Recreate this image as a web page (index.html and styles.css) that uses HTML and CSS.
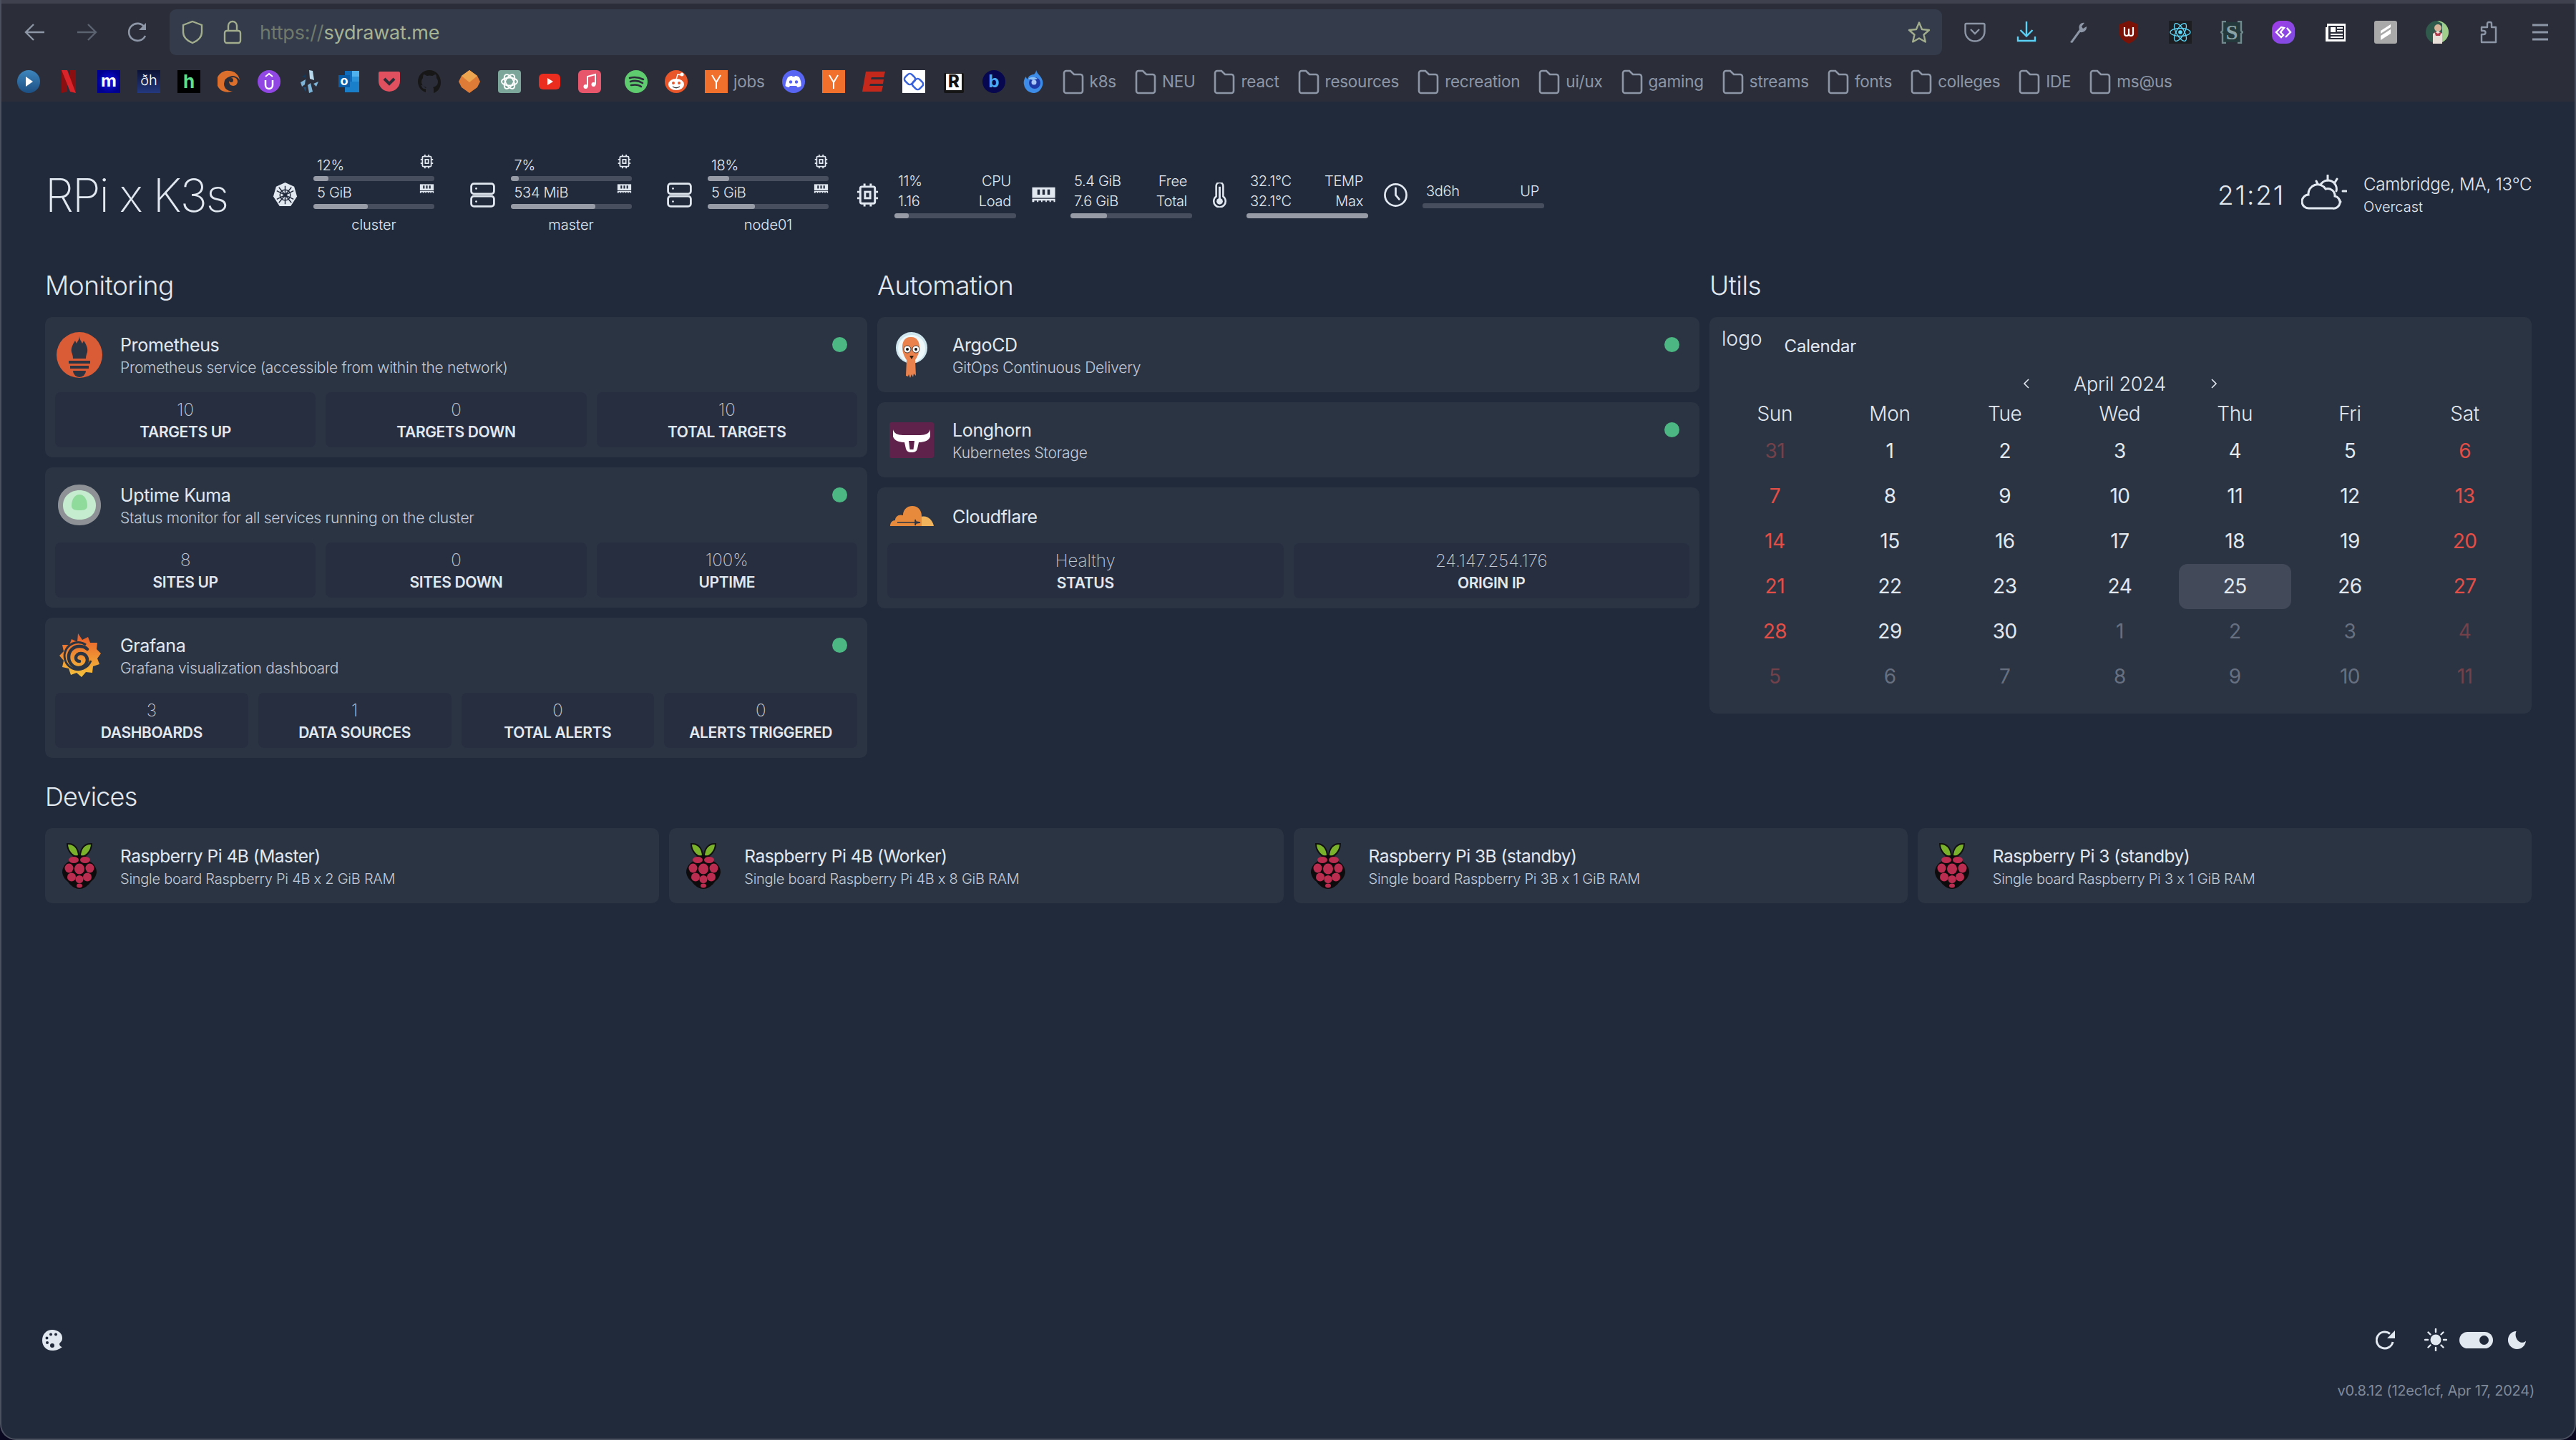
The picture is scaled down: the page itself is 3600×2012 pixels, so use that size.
FILE: index.html
```html
<!DOCTYPE html>
<html lang="en">
<head>
<meta charset="utf-8">
<title>RPi x K3s</title>
<link rel="stylesheet" href="styles.css">
</head>
<body>
<svg class="defs" width="0" height="0">
  <defs>
    <symbol id="folder" viewBox="0 0 30 36"><path d="M2 6a3 3 0 0 1 3-3h6l5 5h9a3 3 0 0 1 3 3v20a3 3 0 0 1-3 3H5a3 3 0 0 1-3-3z" fill="none" stroke="currentColor" stroke-width="2.6"/></symbol>
    <symbol id="chip" viewBox="0 0 24 24"><g fill="none" stroke="currentColor" stroke-width="2"><rect x="5" y="4" width="14" height="16" rx="1.5"/><rect x="9.5" y="9" width="5" height="6"/><path d="M9 1v3M15 1v3M9 20v3M15 20v3M2 9h3M2 15h3M19 9h3M19 15h3"/></g></symbol>
    <symbol id="ram" viewBox="0 0 24 14"><path d="M1 0h22v10H1z" fill="currentColor"/><path d="M6 2h2.4v5H6zM10.8 2h2.4v5h-2.4zM15.6 2h2.4v5h-2.4z" fill="#212a3b"/><path d="M1 11h22v3h-1.4v-1.4h-2.6V14h-1.4v-1.4h-2.6V14h-1.2v-1.4h-3V14H9.600v-1.4H7V14H5.600v-1.400H3V14H1z" fill="currentColor"/></symbol>
    <symbol id="server" viewBox="0 0 33 33"><g fill="none" stroke="currentColor" stroke-width="2.600"><rect x="1.500" y="1.500" width="30" height="13.500" rx="3.500"/><rect x="1.500" y="18" width="30" height="13.500" rx="3.500"/></g><circle cx="8" cy="8" r="1.300" fill="currentColor"/><circle cx="8" cy="25" r="1.300" fill="currentColor"/></symbol>
    <symbol id="berry" viewBox="0 0 50 64">
      <path d="M24 19C15 20 8 10 8 1c9-1 16 6 16 18zM26 19c9 1 16-9 16-18-9-1-16 6-16 18z" fill="#7ab32b" stroke="#111" stroke-width="2"/>
      <path d="M25 17c9 0 15 3 15 9 6 3 9 9 9 15-1 6-4 10-8 13-3 5-10 10-16 10S12 59 9 54c-4-3-7-7-8-13 0-6 3-12 9-15 0-6 6-9 15-9z" fill="#0e0b0c"/>
      <g fill="#bb2d50"><ellipse cx="17" cy="23.500" rx="7" ry="4.500"/><ellipse cx="33" cy="23.500" rx="7" ry="4.500"/><ellipse cx="25" cy="36" rx="7" ry="7.500"/><ellipse cx="10.500" cy="35" rx="6" ry="6.500"/><ellipse cx="39.500" cy="35" rx="6" ry="6.500"/><ellipse cx="14" cy="47.500" rx="6" ry="6"/><ellipse cx="36" cy="47.500" rx="6" ry="6"/><ellipse cx="25" cy="50.500" rx="5.500" ry="5.500"/><ellipse cx="25" cy="59.500" rx="4" ry="3"/></g>
    </symbol>
    <linearGradient id="graf" x1="0" y1="1" x2="0" y2="0"><stop offset="0" stop-color="#f5c23c"/><stop offset="1" stop-color="#e9592a"/></linearGradient>
    <linearGradient id="blue" x1="0" y1="0" x2="0" y2="1"><stop offset="0" stop-color="#3d86bd"/><stop offset="1" stop-color="#1d4f83"/></linearGradient>
    <linearGradient id="purp" x1="0" y1="0" x2="1" y2="1"><stop offset="0" stop-color="#a23be8"/><stop offset="1" stop-color="#7b4fe0"/></linearGradient>
    <linearGradient id="navy" x1="0" y1="0" x2="0" y2="1"><stop offset="0" stop-color="#0c1336"/><stop offset="1" stop-color="#24387e"/></linearGradient>
    <radialGradient id="mblue"><stop offset="0" stop-color="#1414e8"/><stop offset="1" stop-color="#000090"/></radialGradient>
  </defs>
</svg>
<div class="window">
  <header class="browser">
    <div class="nav">
      <svg class="nav-ic" viewBox="0 0 32 32"><path d="M29 16H4M14 5 3 16l11 11" fill="none" stroke="#8d96a6" stroke-width="2.400"/></svg>
      <svg class="nav-ic dim" viewBox="0 0 32 32"><path d="M3 16h25M18 5l11 11-11 11" fill="none" stroke="#5b6270" stroke-width="2.400"/></svg>
      <svg class="nav-ic" viewBox="0 0 32 32"><path d="M26 21a12 12 0 1 1-1-12" fill="none" stroke="#8d96a6" stroke-width="2.600"/><path d="M27 3v10H17z" fill="#8d96a6"/></svg>
      <div class="address">
        <svg class="ad-shield" viewBox="0 0 32 34"><path d="M16 2 29 7v10c0 7-6 12-13 15C9 29 3 24 3 17V7z" fill="none" stroke="#a1ad8c" stroke-width="2.400"/></svg>
        <svg class="ad-lock" viewBox="0 0 26 34"><path d="M7 15V8a6 6 0 0 1 12 0v7" fill="none" stroke="#a1ad8c" stroke-width="2.400"/><rect x="2" y="15" width="22" height="17" rx="3" fill="none" stroke="#a1ad8c" stroke-width="2.400"/></svg>
        <span class="url"><span class="proto">https://</span>sydrawat.me</span>
        <svg class="ad-star" viewBox="0 0 32 32"><path d="M16 2.500l4 9.500 10 1-7.500 6.500 2.300 10L16 24.500 7.200 29.500l2.300-10L2 13l10-1z" fill="none" stroke="#a1ad8c" stroke-width="2.400" stroke-linejoin="round"/></svg>
      </div>
      <div class="ext">
        <svg class="ic32" viewBox="0 0 32 32"><path d="M4 4h24a1.500 1.500 0 0 1 1.500 1.500V15a13.500 13.500 0 0 1-27 0V5.500A1.500 1.500 0 0 1 4 4z" fill="none" stroke="#8d96a6" stroke-width="2.400"/><path d="M10 12l6 6 6-6" fill="none" stroke="#8d96a6" stroke-width="2.400"/></svg>
        <svg class="ic32" viewBox="0 0 32 32"><path d="M16 1v20M7.500 13l8.500 8.500 8.500-8.500M4 22v6h24v-6" fill="none" stroke="#5ad1f5" stroke-width="2.400"/></svg>
        <svg class="ic32" viewBox="0 0 32 32"><path d="M5 30 18 12c-2-5 2-10 7-9l-4 5 2 3 5-3c1 5-4 9-9 8L8 31z" fill="#8d96a6"/></svg>
        <svg class="ic32" viewBox="0 0 32 32"><path d="M16 0 29 5v13c0 6-6 11-13 14C9 29 3 24 3 18V5z" fill="#7a1208"/><path d="M10 9v9a3 3 0 0 0 6 0v-7 7a3 3 0 0 0 6 0V9" fill="none" stroke="#fff" stroke-width="2.200"/></svg>
        <svg class="ic32" viewBox="0 0 32 32"><rect width="32" height="32" fill="#1c1e21"/><g fill="none" stroke="#61dafb" stroke-width="1.300"><ellipse cx="16" cy="16" rx="14" ry="5.500"/><ellipse cx="16" cy="16" rx="14" ry="5.500" transform="rotate(60 16 16)"/><ellipse cx="16" cy="16" rx="14" ry="5.500" transform="rotate(120 16 16)"/></g><circle cx="16" cy="16" r="2.800" fill="#61dafb"/></svg>
        <svg class="ic32" viewBox="0 0 32 32"><rect x="3" y="2" width="26" height="28" fill="#24393c"/><path d="M8 1H3v13l-2 2 2 2v13h5M24 1h5v13l2 2-2 2v13h-5" fill="none" stroke="#70898c" stroke-width="2.400"/><text class="ext-s" x="16" y="26" text-anchor="middle">S</text></svg>
        <svg class="ic32" viewBox="0 0 32 32"><rect width="32" height="32" rx="12" fill="url(#purp)"/><path d="M13 9 6 16l7 7 3-3-4-4 5-6zM21 10l5 6-7 7" fill="none" stroke="#fff" stroke-width="2.400"/></svg>
        <svg class="ic32" viewBox="0 0 32 32"><path d="M5 4h26v25H3V9h2z" fill="#fff"/><path d="M7 7h22v19H7z" fill="#2b2e39"/><path d="M10 9h7v7h-7zM19 9h8v2h-8zM19 13h8v2h-8zM10 18h17v2H10zM10 22h17v2H10z" fill="#fff"/></svg>
        <svg class="ic32" viewBox="0 0 32 32"><rect width="32" height="32" rx="3" fill="#a9a9a9"/><path d="M23 5 9 14v4l14-9zM23 12 9 21v6l14-9z" fill="#fff"/></svg>
        <svg class="ic32" viewBox="0 0 32 32"><circle cx="16" cy="16" r="16" fill="#2f5a4c"/><path d="M16 0a16 16 0 0 1 16 16c0 6-4 12-9 14V4z" fill="#9fcf8a"/><circle cx="17" cy="10" r="5" fill="#d9b49a"/><path d="M10 32V18l7-4 6 4v14z" fill="#e8e0d8"/><path d="M12 15l5 3 5-3-2 6h-6z" fill="#b23a4a"/></svg>
        <svg class="ic32" viewBox="0 0 32 32"><path d="M14 9V4a2 2 0 0 1 2-2h2a2 2 0 0 1 2 2v5h6v21H6V19h3a2.500 2.500 0 0 0 0-5H6V9z" fill="none" stroke="#8d96a6" stroke-width="2.400" stroke-linejoin="round"/></svg>
        <svg class="ic32" viewBox="0 0 32 32"><path d="M5 6h22M5 16h22M5 26h22" stroke="#8d96a6" stroke-width="3"/></svg>
      </div>
    </div>
    <div class="bookmarks">
      <svg class="ic32" viewBox="0 0 32 32"><circle cx="16" cy="16" r="16" fill="url(#blue)"/><path d="M12 9l10 7-10 7z" fill="#fff"/></svg>
      <svg class="ic32" viewBox="0 0 32 32"><path d="M6 0h8v30l-8 2z" fill="#8a0f10"/><path d="M18 0h8v32l-8-2z" fill="#8a0f10"/><path d="M6 0h8l12 32-8-2z" fill="#d8242a"/></svg>
      <svg class="ic32" viewBox="0 0 32 32"><rect width="32" height="32" fill="url(#mblue)"/><text class="fav-b" x="16" y="23" text-anchor="middle">m</text></svg>
      <svg class="ic32" viewBox="0 0 32 32"><rect width="32" height="32" fill="url(#navy)"/><text class="fav-t" x="16" y="21" text-anchor="middle">ðh</text></svg>
      <svg class="ic32" viewBox="0 0 32 32"><rect width="32" height="32" fill="#000"/><text class="fav-h" x="16" y="25" text-anchor="middle">h</text></svg>
      <svg class="ic32" viewBox="0 0 32 32"><path d="M16 1a15 15 0 0 1 15 13 11 11 0 0 0-14-5 11 11 0 0 0-8 10c0 7 6 11 12 10a15 15 0 1 1-5-28z" fill="#dc6f2c"/><circle cx="22" cy="16" r="6" fill="#dc6f2c"/><circle cx="19" cy="14" r="3" fill="#2b2e39"/></svg>
      <svg class="ic32" viewBox="0 0 32 32"><circle cx="16" cy="16" r="16" fill="#9147e4"/><path d="M11 14v7a5 5 0 0 0 10 0v-7" fill="none" stroke="#fff" stroke-width="2.500"/><path d="M11 9l5-4 5 4" fill="none" stroke="#fff" stroke-width="2"/></svg>
      <svg class="ic32" viewBox="0 0 32 32"><path d="M16 0l5 1 2 13-6-2z" fill="#b8d9ec"/><path d="M4 17l7-4-1 7-4 3zM14 21l4-3 3 12-5 2zM22 19l7-3-3 7z" fill="#7db4d8"/><path d="M8 24l4 0-1 6z" fill="#1f4e79"/><path d="M6 9l5-3v5z" fill="#16395a"/></svg>
      <svg class="ic32" viewBox="0 0 32 32"><path d="M10 1h20v15H10z" fill="#0f6cbd"/><path d="M20 1h10v8H20z" fill="#4fb2ef"/><path d="M20 9h10v8H20z" fill="#2a92d8"/><path d="M10 16h20v15H10z" fill="#1a7fcb"/><rect x="1" y="7" width="16" height="17" fill="#0a5ca7"/><text class="fav-o" x="9" y="21" text-anchor="middle">o</text></svg>
      <svg class="ic32" viewBox="0 0 32 32"><path d="M3 2h26a2 2 0 0 1 2 2v11a15 15 0 0 1-30 0V4a2 2 0 0 1 2-2z" fill="#e0505f"/><path d="M9 12l7 7 7-7" fill="none" stroke="#2b2e39" stroke-width="4"/></svg>
      <svg class="ic32" viewBox="0 0 32 32"><path d="M16 0C7 0 0 7 0 16c0 7 4.500 13 11 15v-5c-4 1-5-2-5.500-3-.5-1-2-2 0-2s3 2 4 3c1 1 2 1 2.500 0-4-1-7-3-7-8 0-2 1-4 2-5 0-1 0-3 1-5 2 0 4 2 5 2a14 14 0 0 1 7 0c1 0 3-2 5-2 1 2 1 4 1 5 1 1 2 3 2 5 0 5-3 7-7 8 1 1 1 2 1 3v5c6.500-2 10-8 10-15C32 7 25 0 16 0z" fill="#171717"/></svg>
      <svg class="ic32" viewBox="0 0 32 32"><path d="M16 0l11 8 4 8-4 8-11 8-11-8-4-8 4-8z" fill="#de7c37"/><path d="M16 0l11 8-11 9L5 8z" fill="#eea54f"/></svg>
      <svg class="ic32" viewBox="0 0 32 32"><rect width="32" height="32" rx="4" fill="#7ca69a"/><g fill="none" stroke="#fff" stroke-width="1.800"><ellipse cx="16" cy="16" rx="11" ry="5.500"/><ellipse cx="16" cy="16" rx="11" ry="5.500" transform="rotate(60 16 16)"/><ellipse cx="16" cy="16" rx="11" ry="5.500" transform="rotate(120 16 16)"/></g></svg>
      <svg class="ic32" viewBox="0 0 32 32"><rect x="1" y="5" width="30" height="22" rx="6" fill="#ea2d1f"/><path d="M13 11l8 5-8 5z" fill="#fff"/></svg>
      <svg class="ic32" viewBox="0 0 32 32"><rect width="32" height="32" rx="6" fill="#e8566c"/><path d="M13 23V9l11-3v14" fill="none" stroke="#fff" stroke-width="2"/><circle cx="10.500" cy="23" r="3" fill="#fff"/><circle cx="21.500" cy="20" r="3" fill="#fff"/></svg>
      <svg class="ic32 gap-left" viewBox="0 0 32 32"><circle cx="16" cy="16" r="16" fill="#5fcc6f"/><path d="M7 11c7-2 13-1 19 2M8 16c6-2 12-1 17 2M9 21c5-1 10-1 14 2" fill="none" stroke="#2b2e39" stroke-width="2.600" stroke-linecap="round"/></svg>
      <svg class="ic32" viewBox="0 0 32 32"><circle cx="16" cy="16" r="16" fill="#e9562a"/><ellipse cx="16" cy="20" rx="11" ry="8" fill="#fff"/><circle cx="24" cy="6" r="2.500" fill="#fff"/><path d="M16 13l2-7 6 1" fill="none" stroke="#fff" stroke-width="1.400"/><circle cx="12" cy="18" r="2" fill="#e9562a"/><circle cx="20" cy="18" r="2" fill="#e9562a"/><path d="M11 23c3 2 7 2 10 0" fill="none" stroke="#333" stroke-width="1.400"/></svg>
      <a class="bm bm-plain"><svg class="ic32" viewBox="0 0 32 32"><rect width="32" height="32" fill="#f0702c"/><path d="M10 7l6 10 6-10M16 17v9" fill="none" stroke="#fff" stroke-width="2"/></svg><span>jobs</span></a>
      <svg class="ic32" viewBox="0 0 32 32"><circle cx="16" cy="16" r="16" fill="#5865f2"/><path d="M8 10c3-2 5-2 6-2l.5 1h3l.5-1c1 0 3 0 6 2 2 4 3 8 2.500 12-2 1.500-4 2-5 2l-1.500-2h-9L9.500 24c-1 0-3-.5-5-2C4.500 18 6 14 8 10z" fill="#fff"/><circle cx="12" cy="16.500" r="2.200" fill="#5865f2"/><circle cx="20" cy="16.500" r="2.200" fill="#5865f2"/></svg>
      <svg class="ic32" viewBox="0 0 32 32"><rect width="32" height="32" fill="#f0702c"/><path d="M10 7l6 10 6-10M16 17v9" fill="none" stroke="#fff" stroke-width="2"/></svg>
      <svg class="ic32" viewBox="0 0 32 32"><path d="M5 2h27l-2 8H13l-1 3h18l-1 6H11l-1 3h19l-2 8H0z" fill="#c4281b"/></svg>
      <svg class="ic32" viewBox="0 0 32 32"><rect width="32" height="32" fill="#fff"/><g fill="none" stroke="#3a63db" stroke-width="2.600"><rect x="4" y="6" width="13" height="13" rx="4" transform="rotate(45 10.500 12.500)"/><rect x="15" y="13" width="13" height="13" rx="4" transform="rotate(45 21.500 19.500)"/></g></svg>
      <svg class="ic32" viewBox="0 0 32 32"><rect x="2" y="4" width="28" height="28" rx="2" fill="#151515"/><rect x="5" y="5" width="22" height="23" fill="#fff"/><text class="fav-r" x="16" y="24" text-anchor="middle">R</text></svg>
      <svg class="ic32" viewBox="0 0 32 32"><circle cx="16" cy="16" r="16" fill="#07074f"/><text class="fav-bb" x="16" y="24" text-anchor="middle">b</text></svg>
      <svg class="ic32" viewBox="0 0 32 32"><path d="M19 0c1 4 4 6 6 9 3 4 4 8 3 12-2 7-7 11-12 11C9 32 3 27 2 20c-1-5 1-9 3-11 0 2 1 3 2 4 1-5 5-7 9-7 2-2 3-4 3-6z" fill="#3d8de8"/><circle cx="17" cy="18" r="8" fill="#1e3aa8"/><circle cx="16" cy="17" r="3.500" fill="#a9c7f5"/><path d="M8 12c4-3 9-3 13 0l-6 2z" fill="#8cc0f4"/></svg>
      <a class="bm bm-first"><svg class="ic-fold"><use href="#folder"/></svg>k8s</a>
      <a class="bm"><svg class="ic-fold"><use href="#folder"/></svg>NEU</a>
      <a class="bm"><svg class="ic-fold"><use href="#folder"/></svg>react</a>
      <a class="bm"><svg class="ic-fold"><use href="#folder"/></svg>resources</a>
      <a class="bm"><svg class="ic-fold"><use href="#folder"/></svg>recreation</a>
      <a class="bm"><svg class="ic-fold"><use href="#folder"/></svg>ui/ux</a>
      <a class="bm"><svg class="ic-fold"><use href="#folder"/></svg>gaming</a>
      <a class="bm"><svg class="ic-fold"><use href="#folder"/></svg>streams</a>
      <a class="bm"><svg class="ic-fold"><use href="#folder"/></svg>fonts</a>
      <a class="bm"><svg class="ic-fold"><use href="#folder"/></svg>colleges</a>
      <a class="bm"><svg class="ic-fold"><use href="#folder"/></svg>IDE</a>
      <a class="bm"><svg class="ic-fold"><use href="#folder"/></svg>ms@us</a>
    </div>
  </header>

  <main class="page">
    <div class="top">
      <h1 class="brand">RPi x K3s</h1>
      <div class="res res-node">
        <svg class="res-ic" viewBox="0 0 36 36"><path d="M18 0l13 6 4 14-9 14H10L1 20 5 6z" fill="#e2e8f0"/><g fill="none" stroke="#212a3b" stroke-width="1.500"><circle cx="18" cy="18" r="7.500"/><path d="M18 5v26M6 12l24 12M30 12 6 24M9 7l18 22M27 7 9 29"/></g><circle cx="18" cy="18" r="2.500" fill="#212a3b"/></svg>
        <div class="res-col">
          <div class="res-row"><span>12%</span><svg class="mini-chip"><use href="#chip"/></svg></div>
          <div class="bar"><i class="fill" style="width:12.600%"></i></div>
          <div class="res-row"><span>5 GiB</span><svg class="mini-ram"><use href="#ram"/></svg></div>
          <div class="bar"><i class="fill" style="width:45%"></i></div>
          <div class="res-name">cluster</div>
        </div>
      </div>
      <div class="res res-node">
        <svg class="res-ic"><use href="#server"/></svg>
        <div class="res-col">
          <div class="res-row"><span>7%</span><svg class="mini-chip"><use href="#chip"/></svg></div>
          <div class="bar"><i class="fill" style="width:7%"></i></div>
          <div class="res-row"><span>534 MiB</span><svg class="mini-ram"><use href="#ram"/></svg></div>
          <div class="bar"><i class="fill" style="width:70%"></i></div>
          <div class="res-name">master</div>
        </div>
      </div>
      <div class="res res-node res-last">
        <svg class="res-ic"><use href="#server"/></svg>
        <div class="res-col">
          <div class="res-row"><span>18%</span><svg class="mini-chip"><use href="#chip"/></svg></div>
          <div class="bar"><i class="fill" style="width:18%"></i></div>
          <div class="res-row"><span>5 GiB</span><svg class="mini-ram"><use href="#ram"/></svg></div>
          <div class="bar"><i class="fill" style="width:39%"></i></div>
          <div class="res-name">node01</div>
        </div>
      </div>
      <div class="res res-host">
        <svg class="res-ic"><use href="#chip"/></svg>
        <div class="host-col">
          <div class="host-row"><span>11%</span><span>CPU</span></div>
          <div class="host-row"><span>1.16</span><span>Load</span></div>
          <div class="bar host-bar"><i class="fill" style="width:11.500%"></i></div>
        </div>
      </div>
      <div class="res res-host">
        <svg class="res-ic ram-big"><use href="#ram"/></svg>
        <div class="host-col">
          <div class="host-row"><span>5.4 GiB</span><span>Free</span></div>
          <div class="host-row"><span>7.6 GiB</span><span>Total</span></div>
          <div class="bar host-bar"><i class="fill" style="width:30%"></i></div>
        </div>
      </div>
      <div class="res res-host">
        <svg class="res-ic" viewBox="0 0 36 36"><path d="M13 20V5a5 5 0 0 1 10 0v15a8.500 8.500 0 1 1-10 0z" fill="none" stroke="currentColor" stroke-width="2.600"/><path d="M18 6v19" stroke="currentColor" stroke-width="3"/><circle cx="18" cy="27" r="4.500" fill="currentColor"/></svg>
        <div class="host-col">
          <div class="host-row"><span>32.1°C</span><span>TEMP</span></div>
          <div class="host-row"><span>32.1°C</span><span>Max</span></div>
          <div class="bar host-bar"><i class="fill" style="width:100%"></i></div>
        </div>
      </div>
      <div class="res res-host res-up">
        <svg class="res-ic" viewBox="0 0 36 36"><circle cx="18" cy="18" r="15.500" fill="none" stroke="currentColor" stroke-width="2.800"/><path d="M18 8v10l5 6" fill="none" stroke="currentColor" stroke-width="2.800" stroke-linecap="round"/></svg>
        <div class="host-col">
          <div class="host-row up-row"><span>3d6h</span><span>UP</span></div>
          <div class="bar host-bar"></div>
        </div>
      </div>
      <div class="weather">
        <span class="clock">21:21</span>
        <svg class="wx-ic" viewBox="0 0 64 50"><g fill="none" stroke="currentColor" stroke-width="3" stroke-linecap="round"><path d="M37 1v7M50 6l-3 5M58 23h5M53 35l2 3M21 9l2 4"/><path d="M27 14a12 12 0 0 1 22 9"/><path d="M11 47a9.500 9.500 0 0 1-1-19A13 13 0 0 1 34 20a10 10 0 0 1 13 10 8.500 8.500 0 0 1-3 17z"/></g></svg>
        <div class="wx-text">
          <div class="wx-city">Cambridge, MA, 13°C</div>
          <div class="wx-cond">Overcast</div>
        </div>
      </div>
    </div>

    <div class="columns">
      <section>
        <h2 class="sec-title">Monitoring</h2>
        <div class="stack">
          <article class="card">
            <div class="svc">
              <svg class="svc-ic" viewBox="0 0 64 64"><circle cx="32" cy="32" r="32" fill="#d95c36"/><path d="M32 5c0 6 3 8 4 11l2-4c4 6 6 11 5 16-1 3-2 5-2 9H23c0-4-1-6-2-9-1-5 1-10 5-16l2 4c1-3 4-5 4-11z" fill="#2b3443"/><path d="M17 40h30v4H17zM19 47h26v4H19z" fill="#2b3443"/><path d="M23 54h18a9 9 0 0 1-18 0z" fill="#2b3443"/></svg>
              <div class="svc-text"><div class="svc-name">Prometheus</div><div class="svc-desc">Prometheus service (accessible from within the network)</div></div>
              <i class="dot"></i>
            </div>
            <div class="stats">
              <div class="stat"><div class="val">10</div><div class="lab">Targets Up</div></div>
              <div class="stat"><div class="val">0</div><div class="lab">Targets Down</div></div>
              <div class="stat"><div class="val">10</div><div class="lab">Total Targets</div></div>
            </div>
          </article>
          <article class="card">
            <div class="svc">
              <svg class="svc-ic" viewBox="0 0 64 64"><path d="M32 3c18 0 30 12 30 29 0 16-12 28-30 28S2 48 2 32C2 15 14 3 32 3z" fill="#8e9297"/><path d="M32 11c13 0 23 9 23 21 0 13-10 20-23 20S9 45 9 32c0-12 10-21 23-21z" fill="#c6ecd0"/><path d="M32 17c7 0 11 7 11 16 0 5-5 6-11 6s-11-1-11-6c0-9 4-16 11-16z" fill="#8edb9b"/></svg>
              <div class="svc-text"><div class="svc-name">Uptime Kuma</div><div class="svc-desc">Status monitor for all services running on the cluster</div></div>
              <i class="dot"></i>
            </div>
            <div class="stats">
              <div class="stat"><div class="val">8</div><div class="lab">Sites Up</div></div>
              <div class="stat"><div class="val">0</div><div class="lab">Sites Down</div></div>
              <div class="stat"><div class="val">100%</div><div class="lab">Uptime</div></div>
            </div>
          </article>
          <article class="card">
            <div class="svc">
              <svg class="svc-ic" viewBox="0 0 64 64"><path d="M30 1l6 9 8-4 3 8 10 0-1 9 6 6-5 7 3 8-9 3-1 9-9-1-6 7-7-6-8 3-3-9-9-2 2-9-6-7 6-6-2-9 10 0 3-8 8 4z" fill="url(#graf)"/><path d="M41 17a19 19 0 1 0 7 22" fill="none" stroke="#2b3443" stroke-width="3"/><path d="M43 23c-3-3-7-4-11-4-9 0-15 7-15 15s6 15 14 15c7 0 12-5 12-11 0-5-4-9-9-9-4 0-7 3-7 6s2 5 5 5" fill="none" stroke="#2b3443" stroke-width="4.500" stroke-linecap="round"/></svg>
              <div class="svc-text"><div class="svc-name">Grafana</div><div class="svc-desc">Grafana visualization dashboard</div></div>
              <i class="dot"></i>
            </div>
            <div class="stats">
              <div class="stat"><div class="val">3</div><div class="lab">Dashboards</div></div>
              <div class="stat"><div class="val">1</div><div class="lab">Data Sources</div></div>
              <div class="stat"><div class="val">0</div><div class="lab">Total Alerts</div></div>
              <div class="stat"><div class="val">0</div><div class="lab">Alerts Triggered</div></div>
            </div>
          </article>
        </div>
      </section>

      <section>
        <h2 class="sec-title">Automation</h2>
        <div class="stack">
          <article class="card">
            <div class="svc">
              <svg class="svc-ic" viewBox="0 0 64 64"><circle cx="32" cy="22" r="22" fill="#cfe6ee"/><circle cx="32" cy="23" r="19" fill="#eef8fb"/><path d="M32 7c7 0 11 6 11 14 0 9-4 15-6 18l1 22-3-3-1 5-2-4-2 5-2-5-1 3-3-1 1-22c-2-3-6-9-6-18 0-8 4-14 11-14z" fill="#e9824d"/><circle cx="26" cy="24" r="5" fill="#fff" stroke="#222" stroke-width=".8"/><circle cx="38" cy="24" r="5" fill="#fff" stroke="#222" stroke-width=".8"/><circle cx="26" cy="24" r="2" fill="#111"/><circle cx="38" cy="24" r="2" fill="#111"/><path d="M29 33h6l-3 5z" fill="#321"/></svg>
              <div class="svc-text"><div class="svc-name">ArgoCD</div><div class="svc-desc">GitOps Continuous Delivery</div></div>
              <i class="dot"></i>
            </div>
          </article>
          <article class="card">
            <div class="svc">
              <svg class="svc-ic" viewBox="0 0 64 64"><rect x="1" y="7" width="62" height="50" rx="3" fill="#5f224a"/><path d="M6 17c1 5 6 8 14 8h24c8 0 13-3 14-8v10c-2 6-9 8-16 8l-2 9c-1 4-4 5-8 5s-7-1-8-5l-2-9c-7 0-14-2-16-8z" fill="#fff"/><path d="M28 33h8l-1.500 12h-5z" fill="#5f224a"/></svg>
              <div class="svc-text"><div class="svc-name">Longhorn</div><div class="svc-desc">Kubernetes Storage</div></div>
              <i class="dot"></i>
            </div>
          </article>
          <article class="card">
            <div class="svc svc-short">
              <svg class="svc-ic" viewBox="0 0 64 64"><path d="M2 47c0-5 3-8 7-8 0-5 5-9 11-7 0-8 6-13 13-13 8 0 13 6 13 14l2 14z" fill="#e88a3c"/><path d="M46 34c8-2 15 4 17 13H46z" fill="#f2b35d"/><path d="M12 42h26M37 46v-8l1 3 6 1-6 1z" fill="none" stroke="#2b3443" stroke-width="1.500"/></svg>
              <div class="svc-text"><div class="svc-name">Cloudflare</div></div>
            </div>
            <div class="stats">
              <div class="stat"><div class="val">Healthy</div><div class="lab">Status</div></div>
              <div class="stat"><div class="val">24.147.254.176</div><div class="lab">Origin IP</div></div>
            </div>
          </article>
        </div>
      </section>

      <section>
        <h2 class="sec-title">Utils</h2>
        <article class="card cal">
          <div class="cal-head"><span class="cal-logo">logo</span><span class="cal-title">Calendar</span></div>
          <div class="cal-nav">
            <svg class="chev" viewBox="0 0 10 14"><path d="M8 1 2 7l6 6" fill="none" stroke="currentColor" stroke-width="1.600"/></svg>
            <span class="cal-month">April 2024</span>
            <svg class="chev" viewBox="0 0 10 14"><path d="M2 1l6 6-6 6" fill="none" stroke="currentColor" stroke-width="1.600"/></svg>
          </div>
          <div class="cal-grid">
            <div class="dow">Sun</div><div class="dow">Mon</div><div class="dow">Tue</div><div class="dow">Wed</div><div class="dow">Thu</div><div class="dow">Fri</div><div class="dow">Sat</div>
            <div class="day we out">31</div><div class="day">1</div><div class="day">2</div><div class="day">3</div><div class="day">4</div><div class="day">5</div><div class="day we">6</div>
            <div class="day we">7</div><div class="day">8</div><div class="day">9</div><div class="day">10</div><div class="day">11</div><div class="day">12</div><div class="day we">13</div>
            <div class="day we">14</div><div class="day">15</div><div class="day">16</div><div class="day">17</div><div class="day">18</div><div class="day">19</div><div class="day we">20</div>
            <div class="day we">21</div><div class="day">22</div><div class="day">23</div><div class="day">24</div><div class="day today">25</div><div class="day">26</div><div class="day we">27</div>
            <div class="day we">28</div><div class="day">29</div><div class="day">30</div><div class="day out">1</div><div class="day out">2</div><div class="day out">3</div><div class="day we out">4</div>
            <div class="day we out">5</div><div class="day out">6</div><div class="day out">7</div><div class="day out">8</div><div class="day out">9</div><div class="day out">10</div><div class="day we out">11</div>
          </div>
        </article>
      </section>
    </div>

    <section class="devices">
      <h2 class="sec-title">Devices</h2>
      <div class="dev-grid">
        <article class="card"><div class="svc"><svg class="svc-ic"><use href="#berry"/></svg><div class="svc-text"><div class="svc-name">Raspberry Pi 4B (Master)</div><div class="svc-desc">Single board Raspberry Pi 4B x 2 GiB RAM</div></div></div></article>
        <article class="card"><div class="svc"><svg class="svc-ic"><use href="#berry"/></svg><div class="svc-text"><div class="svc-name">Raspberry Pi 4B (Worker)</div><div class="svc-desc">Single board Raspberry Pi 4B x 8 GiB RAM</div></div></div></article>
        <article class="card"><div class="svc"><svg class="svc-ic"><use href="#berry"/></svg><div class="svc-text"><div class="svc-name">Raspberry Pi 3B (standby)</div><div class="svc-desc">Single board Raspberry Pi 3B x 1 GiB RAM</div></div></div></article>
        <article class="card"><div class="svc"><svg class="svc-ic"><use href="#berry"/></svg><div class="svc-text"><div class="svc-name">Raspberry Pi 3 (standby)</div><div class="svc-desc">Single board Raspberry Pi 3 x 1 GiB RAM</div></div></div></article>
      </div>
    </section>

    <footer class="foot">
      <div class="foot-row">
        <svg class="palette" viewBox="0 0 28 29"><path d="M14 0C6 0 0 6 0 15c0 8 6 14 14 14 5 0 9-1 14-5-2 0-4-2-4-4 0-1 1-2 2-3 2-2 2-4 2-6C28 5 22 0 14 0z" fill="#e2e8f0"/><g fill="#212a3b"><circle cx="12" cy="6.500" r="2"/><circle cx="19" cy="6.500" r="2"/><circle cx="6.500" cy="11.500" r="2"/><circle cx="7" cy="18" r="2"/><circle cx="14" cy="22" r="3"/></g></svg>
        <div class="foot-tools">
          <svg class="f-reload" viewBox="0 0 28 28"><path d="M24 17A11.500 11.500 0 1 1 20 5.500" fill="none" stroke="#e2e8f0" stroke-width="3"/><path d="M27 1v11H16z" fill="#e2e8f0"/></svg>
          <svg class="f-sun" viewBox="0 0 32 32"><circle cx="16" cy="16" r="7.500" fill="#e2e8f0"/><path d="M16 1v4M16 27v4M1 16h4M27 16h4M5.500 5.500l3 3M23.500 23.500l3 3M5.500 26.500l3-3M23.500 8.500l3-3" stroke="#e2e8f0" stroke-width="2.400" stroke-linecap="round"/></svg>
          <div class="toggle"><i class="knob"></i></div>
          <svg class="f-moon" viewBox="0 0 28 28"><path d="M13 1C6 1 1 7 1 14s6 13 13 13 12-5 13-12c-2 2-5 3-8 2-5-2-9-9-6-16z" fill="#e2e8f0"/></svg>
        </div>
      </div>
      <div class="version">v0.8.12 (12ec1cf, Apr 17, 2024)</div>
    </footer>
  </main>
</div>
</body>
</html>
```
FILE: styles.css
```css
* { box-sizing: border-box; }
html, body { margin: 0; padding: 0; }
body {
  background: #0a0720;
  font-family: Inter, "Liberation Sans", sans-serif;
  color: #e2e8f0;
  width: 3600px;
  height: 2012px;
  overflow: hidden;
}
.defs { position: absolute; }
h1, h2 { margin: 0; font-weight: 300; }
i { display: block; }

.window {
  width: 3600px;
  height: 2012px;
  border: 2px solid #4a505e;
  border-top: 0;
  border-radius: 0 0 22px 22px;
  overflow: hidden;
  background: #212a3b;
  display: flex;
  flex-direction: column;
}

/* browser chrome */
.browser { background: #2b2e39; border-top: 5px solid #3f424e; flex: none; }
.nav { height: 80px; display: flex; align-items: center; padding-left: 31px; }
.nav-ic { width: 32px; height: 32px; margin-right: 40px; flex: none; }
.address {
  width: 2477px;
  height: 64px;
  margin-left: -12px;
  background: #343b4b;
  border-radius: 9px;
  display: flex;
  align-items: center;
  padding: 0 16px;
}
.ad-shield { width: 32px; height: 34px; flex: none; }
.ad-lock { width: 26px; height: 34px; margin-left: 27px; flex: none; }
.url { margin-left: 25px; font-size: 27px; color: #a7b393; letter-spacing: -0.2px; }
.proto { color: #6f7a6b; }
.ad-star { width: 32px; height: 32px; margin-left: auto; }
.ext { display: flex; gap: 39.800px; margin-left: 30px; }
.ic32 { width: 32px; height: 32px; flex: none; display: block; }
.ext-s { font: 700 30px "Liberation Serif", serif; fill: #8aa3a6; }

.bookmarks {
  height: 57px;
  display: flex;
  align-items: center;
  gap: 24px;
  padding-left: 22px;
}
.bm { display: flex; align-items: center; font-size: 22.500px; color: #8d96a6; gap: 8px; letter-spacing: -0.25px; margin-left: 2px; }
.bm-plain, .bm-first { margin-left: 0; }
.ic-fold { width: 30px; height: 36px; color: #8d96a6; flex: none; }
.gap-left { margin-left: 9px; }
.fav-b { font: 700 24px Inter, sans-serif; fill: #fff; }
.fav-t { font: 300 20px Inter, sans-serif; fill: #fff; }
.fav-h { font: 700 26px Inter, sans-serif; fill: #5fe08c; }
.fav-o { font: 700 18px Inter, sans-serif; fill: #fff; }
.fav-r { font: 800 24px Inter, sans-serif; fill: #111; }
.fav-bb { font: 700 24px Inter, sans-serif; fill: #49a8f5; }

/* page */
.page { flex: 1; display: flex; flex-direction: column; padding: 70px 60px 0 61px; }
.top { display: flex; align-items: center; height: 120px; }
.brand { width: 318px; font-size: 64px; font-weight: 250; letter-spacing: -2px; color: #e2e8f0; white-space: nowrap; }

.res { display: flex; align-items: center; color: #e2e8f0; font-size: 20px; font-weight: 300; }
.res-node { margin-right: 49.500px; }
.res-last { margin-right: 36.500px; }
.res-host { margin-right: 20.500px; }
.res-up { margin-right: 0; }
.res-ic { width: 35px; height: 35px; flex: none; color: #e2e8f0; }
.res-node .res-ic { margin-right: 22px; }
.res-host .res-ic { margin-right: 20.500px; }
.ram-big { height: 24px; }

.res-col { width: 169px; }
.res-row { height: 31px; padding-left: 5px; display: flex; justify-content: space-between; align-items: center; letter-spacing: -0.3px; }
.res-col .bar + .res-row { height: 32px; }
.mini-chip { width: 21px; height: 21px; align-self: flex-start; color: #e2e8f0; }
.mini-ram { width: 21px; height: 13px; align-self: flex-start; margin-top: 4px; color: #e2e8f0; }
.bar { height: 7px; background: #474e5d; border-radius: 3px; overflow: hidden; }
.fill { height: 100%; background: #969ba6; border-radius: 3px; }
.res-name { margin-top: 7px; line-height: 30px; text-align: center; }

.host-col { width: 170px; }
.host-row { height: 28px; display: flex; justify-content: space-between; align-items: center; padding: 0 7px 0 5px; letter-spacing: -0.3px; }
.host-bar { margin-top: 3px; }

.weather { margin-left: auto; display: flex; align-items: center; gap: 23px; }
.clock { font-size: 37px; font-weight: 300; letter-spacing: 1.800px; }
.wx-ic { width: 64px; height: 50px; color: #e2e8f0; margin-top: -6px; }
.wx-text { font-weight: 300; width: 235px; white-space: nowrap; margin-top: 3px; }
.wx-city { font-size: 24px; line-height: 32px; letter-spacing: -0.25px; }
.wx-cond { font-size: 20px; line-height: 32px; margin-top: -1px; }

.columns { display: grid; grid-template-columns: repeat(3, 1fr); gap: 14px; margin-top: 45px; align-items: start; }
.sec-title { font-size: 37px; line-height: 44px; margin-bottom: 22px; font-weight: 300; letter-spacing: -0.5px; color: #e2e8f0; }
.stack { display: flex; flex-direction: column; gap: 14px; }
.card { background: #2b3443; border-radius: 10px; }
.svc { height: 105px; display: flex; align-items: center; padding-left: 16px; }
.svc-short { height: 78px; }
.svc-ic { width: 64px; height: 64px; flex: none; }
.svc-text { margin-left: 25px; margin-top: 4px; }
.svc-name { font-size: 25px; line-height: 32px; font-weight: 400; letter-spacing: -0.35px; }
.svc-desc { font-size: 21px; line-height: 32px; font-weight: 300; color: #c3cad5; letter-spacing: -0.25px; }
.dot { width: 21px; height: 21px; border-radius: 50%; background: #4cb782; margin: 28px 28px 0 auto; align-self: flex-start; }
.stats { display: flex; gap: 14px; padding: 0 14px 14px; }
.stat { flex: 1; height: 77px; background: #272e40; border-radius: 8px; text-align: center; padding-top: 10px; }
.val { font-size: 24px; line-height: 30px; font-weight: 200; color: #c3cad5; }
.lab { font-size: 21px; line-height: 30px; margin-top: 1px; font-weight: 600; text-transform: uppercase; letter-spacing: -0.35px; color: #e2e8f0; }

.cal { height: 554px; padding: 0 13px 0 11px; }
.cal-head { height: 72px; display: flex; align-items: flex-start; padding-left: 6px; font-weight: 300; }
.cal-logo { font-size: 28px; line-height: 36px; margin-top: 12px; }
.cal-title { font-size: 24px; line-height: 32px; margin: 25px 0 0 31px; font-weight: 400; letter-spacing: -0.2px; }
.cal-nav { width: 272px; height: 42px; margin: 0 auto; display: flex; align-items: center; justify-content: space-between; }
.cal-month { font-size: 27px; font-weight: 300; letter-spacing: -0.2px; }
.chev { width: 10px; height: 14px; color: #e2e8f0; }
.cal-grid { display: grid; grid-template-columns: repeat(7, 1fr); grid-auto-rows: 63px; grid-template-rows: 41.500px; }
.dow { display: flex; align-items: center; justify-content: center; font-size: 28px; font-weight: 300; letter-spacing: -0.3px; color: #e2e8f0; }
.day { display: flex; align-items: center; justify-content: center; font-size: 28px; font-weight: 400; letter-spacing: -0.5px; color: #e2e8f0; border-radius: 12px; width: 157px; margin: 0 auto; }
.we { color: #e34e46; }
.out { color: #677080; }
.we.out { color: #73414a; }
.today { background: #424a59; }

.devices { margin-top: 32px; }
.dev-grid { display: grid; grid-template-columns: repeat(4, 1fr); gap: 14px; }
.dev-grid .svc-name { letter-spacing: -0.5px; font-size: 24.500px; }
.dev-grid .svc-desc { font-size: 20px; }
.devices .sec-title { font-size: 36px; letter-spacing: -0.8px; }

.foot { margin-top: auto; }
.foot-row { display: flex; justify-content: space-between; align-items: center; height: 30px; }
.palette { width: 28px; height: 29px; margin-left: -4px; }
.foot-tools { display: flex; align-items: center; margin-right: 7px; }
.f-reload { width: 28px; height: 28px; margin-right: 40px; }
.f-sun { width: 32px; height: 32px; margin-right: 17px; }
.toggle { width: 47px; height: 23px; border-radius: 12px; background: #e2e8f0; position: relative; margin-right: 20px; }
.knob { position: absolute; top: 5px; right: 6px; width: 13px; height: 13px; border-radius: 50%; background: #212a3b; }
.f-moon { width: 27px; height: 27px; }
.version { margin-top: 41px; height: 82px; font-size: 20px; line-height: 30px; color: #7f8999; text-align: right; font-weight: 400; margin-right: -4px; letter-spacing: -0.22px; }
```
